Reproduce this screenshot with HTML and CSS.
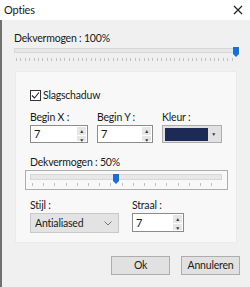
FILE: index.html
```html
<!DOCTYPE html>
<html lang="nl">
<head>
	<meta charset="UTF-8">
	<title>Opties</title>
	<link rel="stylesheet" href="styles.css">
</head>
<body>
	<div class="win">
		<div class="titlebar">
			<span class="title">Opties</span>
			<span class="tb-x"><svg width="10" height="10" viewBox="0 0 10 10"><path d="M1 1L9 9M9 1L1 9" stroke="#222" stroke-width="1.2" fill="none"/></svg></span>
		</div>

		<div class="content">
			<div class="lbl">Dekvermogen : 100%</div>
			<div class="slider slider-top">
				<div class="track"></div>
				<svg class="thumb" style="left: 219px;" width="6" height="10" viewBox="0 0 6 10"><path d="M0 0H6V7L3 10L0 7Z" fill="#1a6fd0"/></svg>
				<div class="ticks"></div>
			</div>

			<div class="group">
				<label class="check">
					<span class="box"><svg width="9" height="9" viewBox="0 0 9 9"><path d="M1 4.5L3.5 7L8 1.5" fill="none" stroke="#222" stroke-width="1.1"/></svg></span>
					Slagschaduw
				</label>

				<div class="row">
					<div class="field f-x">
						<div class="lbl">Begin X :</div>
						<div class="spin"><span class="val">7</span><span class="arrows"><i>&#9650;</i><i>&#9660;</i></span></div>
					</div>
					<div class="field f-y">
						<div class="lbl">Begin Y :</div>
						<div class="spin"><span class="val">7</span><span class="arrows"><i>&#9650;</i><i>&#9660;</i></span></div>
					</div>
					<div class="field">
						<div class="lbl">Kleur :</div>
						<div class="color"><span class="swatch"></span><i>&#9660;</i></div>
					</div>
				</div>

				<div class="lbl lbl-op">Dekvermogen : 50%</div>
				<div class="slider slider-box">
					<div class="track"></div>
					<svg class="thumb" style="left: 87px;" width="6" height="10" viewBox="0 0 6 10"><path d="M0 0H6V7L3 10L0 7Z" fill="#1a6fd0"/></svg>
					<div class="ticks"></div>
				</div>

				<div class="row row-bottom">
					<div class="field f-style">
						<div class="lbl">Stijl :</div>
						<div class="select"><span>Antialiased</span><svg width="8" height="5" viewBox="0 0 8 5"><path d="M0.5 0.5L4 4L7.5 0.5" fill="none" stroke="#777" stroke-width="1"/></svg></div>
					</div>
					<div class="field f-radius">
						<div class="lbl">Straal :</div>
						<div class="spin"><span class="val">7</span><span class="arrows"><i>&#9650;</i><i>&#9660;</i></span></div>
					</div>
				</div>
			</div><!-- .group -->

			<div class="buttons">
				<span class="btn">Ok</span>
				<span class="btn">Annuleren</span>
			</div>
		</div>
	</div><!-- .win -->
</body>
</html>
```

FILE: styles.css
```css
html, body{ margin: 0; padding: 0;}
body{ font-family: Lato, "Noto Sans", sans-serif; font-size: 10.5px; letter-spacing: -0.2px; color: #1a1a1a; background: #f0f0f0;}
.win{ width: 248px; height: 287px; border-left: 2px solid #707070; background: #f0f0f0;}
.titlebar{ display: flex; align-items: center; height: 20px; margin-left: -2px; padding-left: 4px; background: #fff;}
.title{ line-height: 20px; font-size: 11px;}
.tb-x{ display: flex; align-items: center; justify-content: center; width: 12px; height: 12px; margin: 0 6px 0 auto;}
.content{ padding: 11px 0 0 12px;}
.lbl{ height: 14px; line-height: 14px; white-space: nowrap;}
.slider{ position: relative;}
.slider .track{ height: 3px; background: #e7e7e7; border: 1px solid #d6d6d6;}
.slider .thumb{ position: absolute; top: 0; display: block;}
.slider .ticks{ height: 3px; margin: 5px 2px 0; background: repeating-linear-gradient(90deg, #c0c0c0 0 1px, transparent 1px 4.4px);}
.slider-top{ width: 224px; margin-top: 2px; padding-top: 1px;}
.slider-top .track{ width: 221px;}
.group{ width: 206px; height: 154px; margin: 10px 0 0 1px; padding: 16px 0 0 14px; background: #f8f8f8; border: 1px solid #ebebeb;}
.check{ display: flex; align-items: center; gap: 2px; height: 14px;}
.box{ display: flex; align-items: center; justify-content: center; width: 9px; height: 9px; border: 1px solid #333; background: #fff;}
.row{ display: flex; margin-top: 8px;}
.field .lbl{ margin-bottom: 1px;}
.f-x{ width: 67px;}
.f-y{ width: 65px;}
.spin{ display: flex; justify-content: space-between; height: 18px; border: 1px solid #8c8c8c; background: #fff; box-sizing: border-box;}
.f-x .spin{ width: 58px;}
.f-y .spin{ width: 56px;}
.f-radius .spin{ width: 52px;}
.spin .val{ padding-left: 3px; line-height: 16px; font-size: 11px;}
.spin .arrows{ display: flex; flex-direction: column; width: 9px; margin: 1px; background: #e6e6e6;}
.spin .arrows i{ flex: 1; font-style: normal; font-size: 5px; line-height: 8px; text-align: center; color: #333;}
.spin .arrows i + i{ border-top: 1px solid #fff;}
.color{ display: flex; align-items: center; width: 60px; height: 18px; padding: 2px; border: 1px solid #adadad; background: #e1e1e1; box-sizing: border-box;}
.color .swatch{ width: 43px; height: 13px; background: #1c2a55;}
.color i{ flex: 1; font-style: normal; font-size: 5px; text-align: center; color: #333;}
.lbl-op{ margin-top: 12px;}
.slider-box{ width: 193px; height: 14px; margin: 1px 0 0 -5px; padding: 3px 4px 1px; border: 1px solid #adadad;}
.slider-box .track{ width: 190px; height: 4px;}
.slider-box .thumb{ top: 3px;}
.slider-box .ticks{ margin-top: 3px; background: repeating-linear-gradient(90deg, #c0c0c0 0 1px, transparent 1px 11.2px);}
.row-bottom{ margin-top: 8px;}
.f-style{ width: 102px;}
.select{ display: flex; justify-content: space-between; align-items: center; width: 89px; height: 20px; padding: 0 6px 0 4px; border: 1px solid #c8c8c8; background: #e3e3e3; box-sizing: border-box;}
.f-radius .spin{ height: 19px;}
.f-radius .spin .val{ line-height: 17px;}
.buttons{ display: flex; justify-content: flex-end; gap: 11px; width: 226px; margin-top: 13px;}
.btn{ display: inline-block; width: 57px; height: 17px; line-height: 17px; text-align: center; border: 1px solid #adadad; background: #e1e1e1;}
```
